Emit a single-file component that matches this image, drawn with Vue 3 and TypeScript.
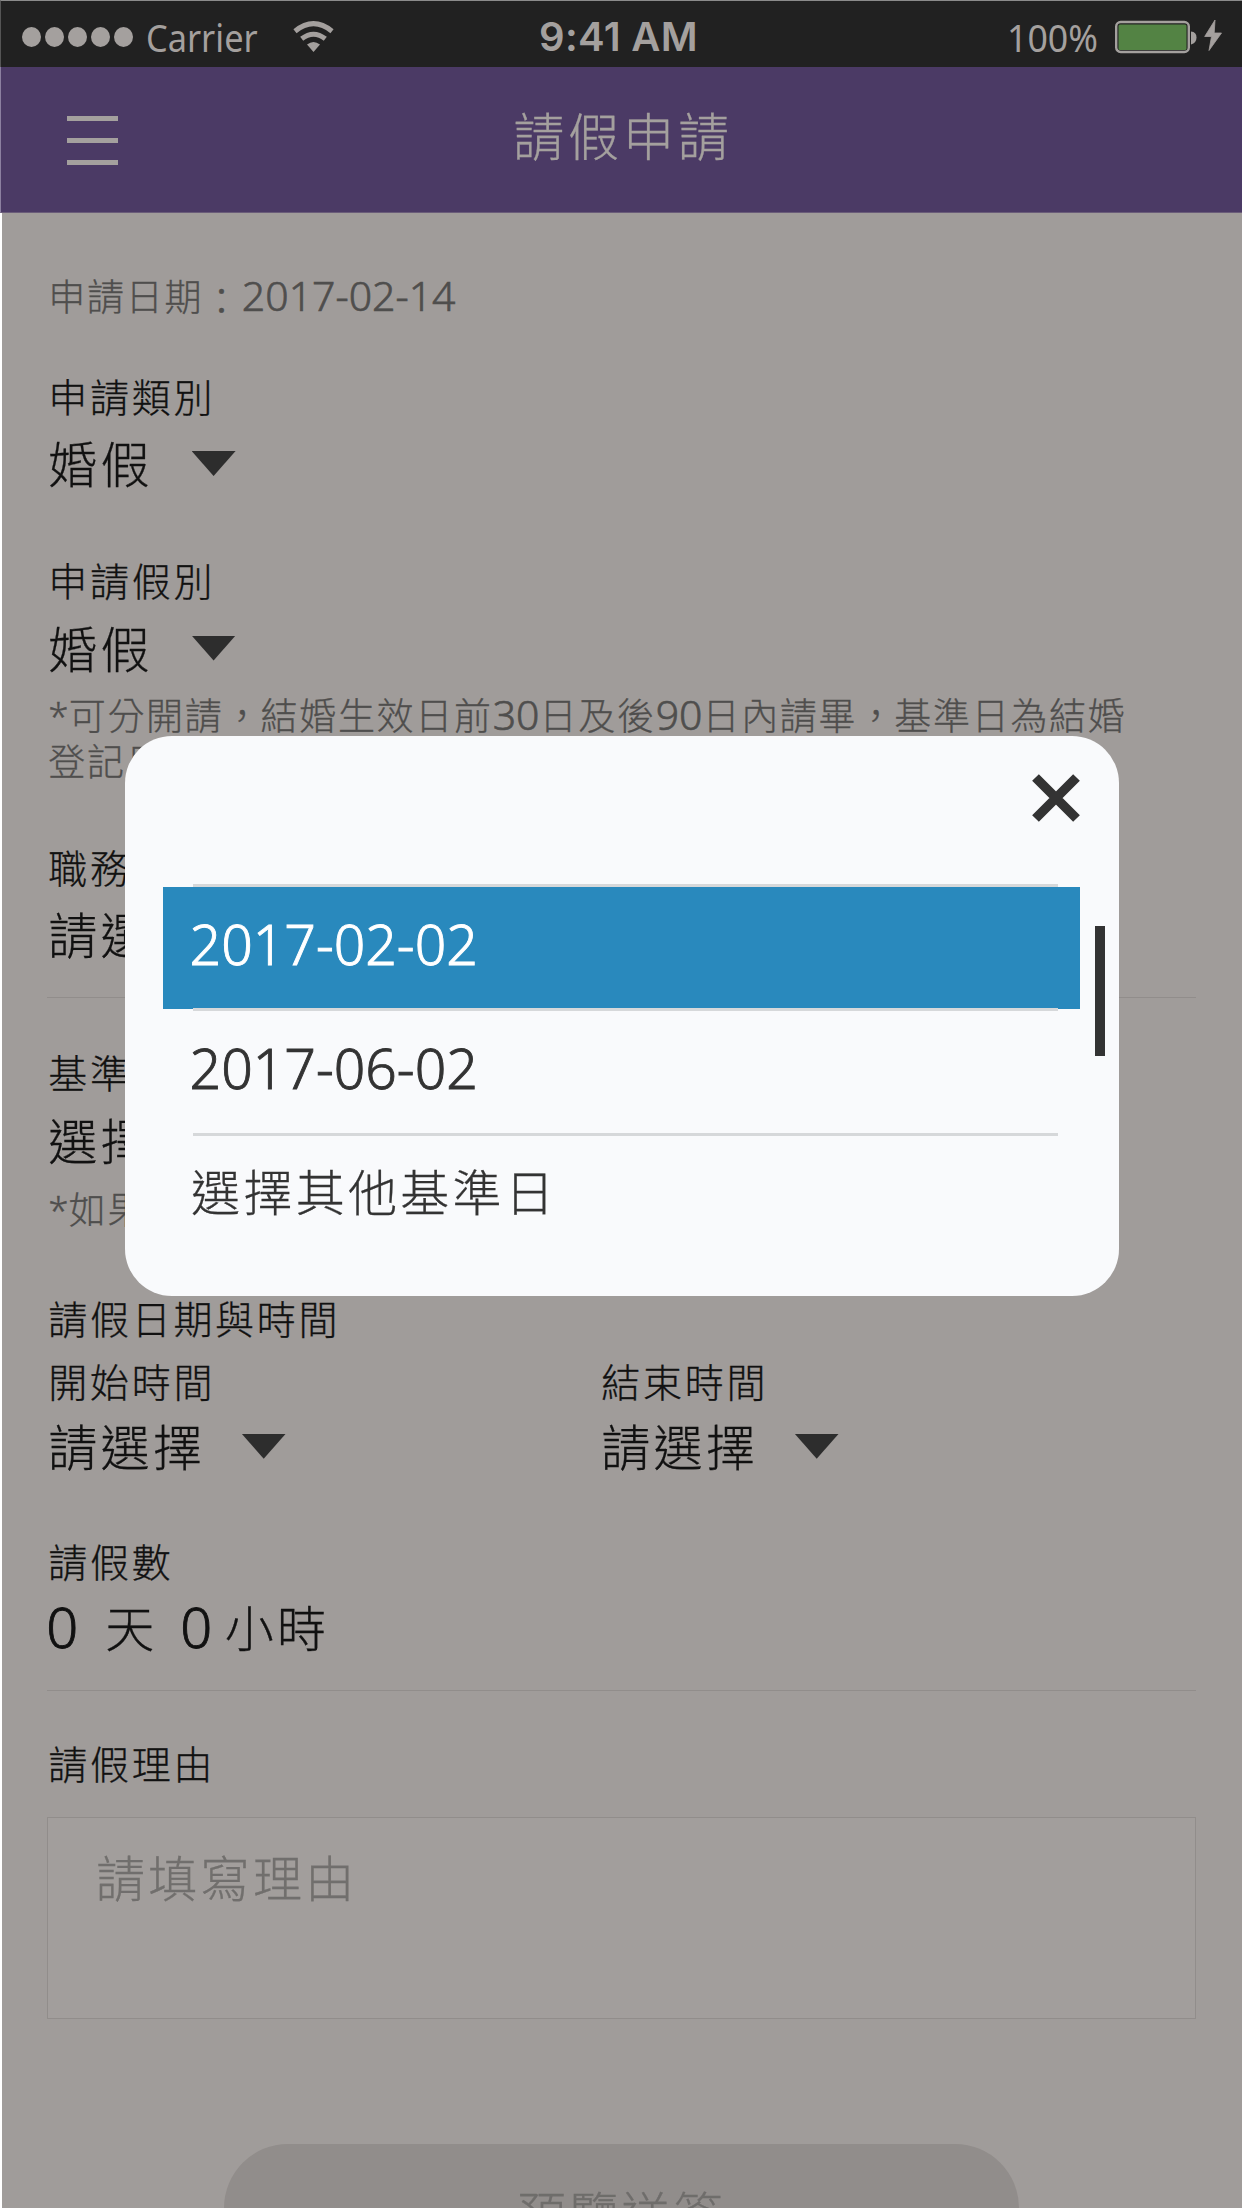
<script setup lang="ts">
import { ref } from 'vue'

interface DateOption {
  label: string
  latin: boolean
}

const options: DateOption[] = [
  { label: '2017-02-02', latin: true },
  { label: '2017-06-02', latin: true },
  { label: '選擇其他基準日', latin: false },
]
const selected = ref(0)
</script>

<template>
  <div class="screen">
    <div class="status">
      <div class="status-left">
        <i v-for="n in 5" :key="n" class="dot"></i>
        <span class="carrier">Carrier</span>
        <svg class="wifi" width="42" height="32" viewBox="0 0 42 32">
          <g fill="none" stroke="#a4a09e">
            <path d="M2 10.2Q20.500-4.800 39 10.200" stroke-width="5" />
            <path d="M8.700 17.800Q20.500 8.600 32.300 17.800" stroke-width="5" />
          </g>
          <path d="M20.500 31 14 23.600Q20.500 18.200 27 23.600Z" fill="#a4a09e" />
        </svg>
      </div>
      <div class="clock">9:41 AM</div>
      <div class="status-right">
        <span class="percent">100%</span>
        <svg class="battery" width="108" height="36" viewBox="0 0 108 36">
          <rect x="1.200" y="3" width="72.600" height="30" rx="4.500" fill="none" stroke="#a4a09e" stroke-width="2.400" />
          <rect x="3.500" y="5.500" width="68" height="25.500" rx="1.500" fill="#538344" />
          <path d="M76 12.500Q81.500 13 81.500 18.500T76 25.500Z" fill="#a4a09e" />
          <path d="M100 1 89.700 17.500H96.500L94 31.500 106.500 14H99.200Z" fill="#a4a09e" stroke="#a4a09e" stroke-width="0.800" />
        </svg>
      </div>
    </div>

    <header class="header">
      <button class="menu" type="button" aria-label="menu"><i></i><i></i><i></i></button>
      <h1>請假申請</h1>
    </header>

    <main class="form">
      <p class="date">申請日期<span class="colon">：</span><span class="num">2017-02-14</span></p>

      <section class="field kind">
        <div class="label">申請類別</div>
        <div class="value">婚假<i class="caret"></i></div>
      </section>

      <section class="field leave">
        <div class="label">申請假別</div>
        <div class="value">婚假<i class="caret"></i></div>
        <p class="note"><span class="star">*</span>可分開請<span class="comma">，</span>結婚生效日前<span class="num">30</span>日及後<span class="num">90</span>日內請畢<span class="comma">，</span>基準日為結婚<br />登記日</p>
      </section>

      <section class="field agent">
        <div class="label">職務代理人</div>
        <div class="value">請選擇</div>
      </section>
      <hr />

      <section class="field base">
        <div class="label">基準日</div>
        <div class="value">選擇基準日</div>
        <p class="note"><span class="star">*</span>如果</p>
      </section>

      <section class="field period">
        <div class="label">請假日期與時間</div>
        <div class="columns">
          <div class="column">
            <div class="label">開始時間</div>
            <div class="value">請選擇<i class="caret"></i></div>
          </div>
          <div class="column">
            <div class="label">結束時間</div>
            <div class="value">請選擇<i class="caret"></i></div>
          </div>
        </div>
      </section>

      <section class="field amount">
        <div class="label">請假數</div>
        <div class="value"><span class="num">0</span><span class="day">天</span><span class="num">0</span><span class="hour">小時</span></div>
      </section>
      <hr />

      <section class="reason">
        <div class="label">請假理由</div>
        <div class="textarea">請填寫理由</div>
      </section>

      <button class="submit" type="button">預覽送簽</button>
    </main>

    <div class="dialog">
      <button class="close" type="button" aria-label="close">
        <svg width="48" height="48" viewBox="0 0 48 48">
          <path d="M3.500 3.500 44.500 44.500M44.500 3.500 3.500 44.500" stroke="#333" stroke-width="9.500" />
        </svg>
      </button>
      <div class="list">
        <div
          v-for="(option, i) in options"
          :key="option.label"
          class="option"
          :class="{ active: i === selected, latin: option.latin }"
          @click="selected = i"
        >
          <span :class="{ num: option.latin }">{{ option.label }}</span>
        </div>
      </div>
      <div class="thumb"></div>
    </div>
  </div>
</template>

<style>
body {
  margin: 0;
  background: #fff;
}
</style>

<style scoped>
.screen {
  position: relative;
  width: 1242px;
  height: 2208px;
  overflow: hidden;
  box-sizing: border-box;
  background: #a09c9a;
  color: #111;
  font-family: 'Noto Sans CJK TC', sans-serif;
  font-weight: 300;
  -webkit-text-stroke-width: 0.300px;
  display: flex;
  flex-direction: column;
}
button {
  border: 0;
  padding: 0;
  margin: 0;
  background: none;
  font: inherit;
  color: inherit;
}
p, h1 {
  margin: 0;
  font-weight: inherit;
}
.num {
  font-family: 'Noto Sans', sans-serif;
  line-height: 1;
  letter-spacing: 0;
  font-weight: 300;
  -webkit-text-stroke-width: 0.016em;
}

.status {
  flex: none;
  height: 67px;
  box-sizing: border-box;
  padding-top: 6px;
  border-top: 1px solid #8b8b8b;
  border-left: 1px solid #555;
  background: #212121;
  color: #a4a09e;
  display: grid;
  grid-template-columns: 1fr auto 1fr;
  align-items: center;
  font-family: 'Noto Sans', sans-serif;
  font-weight: 400;
  -webkit-text-stroke-width: 0;
}
.status-left {
  display: flex;
  align-items: center;
  padding-left: 21px;
}
.dot {
  width: 19px;
  height: 20px;
  margin-right: 4px;
  border-radius: 50%;
  background: #a4a09e;
}
.carrier {
  width: 111px;
  margin-left: 9px;
  font-size: 39px;
  line-height: 58px;
  transform: scaleX(0.88);
  transform-origin: 0 50%;
}
.wifi {
  margin-left: 36px;
}
.clock {
  padding-right: 6px;
  font-family: Inter, sans-serif;
  font-weight: 600;
  font-size: 40px;
  letter-spacing: 0.300px;
  line-height: 58px;
}
.status-right {
  display: flex;
  justify-content: flex-end;
  align-items: center;
  padding-right: 19px;
}
.percent {
  width: 90px;
  margin-right: 18px;
  font-size: 38px;
  line-height: 58px;
  transform: scaleX(0.94);
  transform-origin: 0 50%;
}

.header {
  flex: none;
  height: 146px;
  box-sizing: border-box;
  border-left: 1px solid #8c80a0;
  border-bottom: 1px solid #6a5c79;
  background: #4b3a65;
  color: #a4a09e;
  display: grid;
  grid-template-columns: 203px 1fr 200px;
}
.menu {
  display: flex;
  flex-direction: column;
  gap: 17px;
  padding: 49px 0 0 66px;
}
.menu i {
  width: 51px;
  height: 5px;
  background: #a4a09e;
}
.header h1 {
  font-size: 51px;
  letter-spacing: 3.900px;
  line-height: 135px;
  text-align: center;
}

.form {
  flex: 1;
  border-left: 2px solid #fff;
  padding: 56.500px 46px 0 45px;
  display: flex;
  flex-direction: column;
}
.field,
.date {
  padding-left: 1.300px;
}
.date,
.note {
  color: #4f4e4d;
  font-size: 37px;
  letter-spacing: 1.700px;
  white-space: nowrap;
}
.date {
  height: 50px;
  line-height: 50px;
}
.colon {
  position: relative;
  top: 4px;
}
.comma {
  letter-spacing: 0;
}
.date .num,
.note .num {
  font-size: 41px;
}
.star {
  font-family: 'Noto Sans', sans-serif;
  line-height: 1;
  font-size: 37px;
  letter-spacing: 0;
}
.note {
  line-height: 46.600px;
  margin-top: 14px;
}
.label {
  height: 50px;
  line-height: 50px;
  font-size: 39px;
  letter-spacing: 2.700px;
  white-space: nowrap;
}
.value {
  height: 60px;
  line-height: 60px;
  margin-top: 12.500px;
  font-size: 49px;
  letter-spacing: 3.300px;
  white-space: nowrap;
  display: flex;
  align-items: center;
}
.caret {
  width: 44px;
  height: 25px;
  margin: 3px 0 0 38.700px;
  background: #2d2d2d;
  clip-path: polygon(0 0, 100% 0, 50% 100%);
}
.kind {
  margin-top: 50px;
}
.leave {
  margin-top: 62px;
}
.agent {
  margin-top: 57px;
}
hr {
  width: 100%;
  height: 1px;
  border: 0;
  margin: 34px 0 0;
  background: #918d8b;
}
.base {
  margin-top: 48px;
}
.base .note {
  margin-top: 16.500px;
}
.period {
  margin-top: 60px;
}
.columns {
  margin-top: 13px;
  display: grid;
  grid-template-columns: 553px 1fr;
}
.columns .value {
  margin-top: 10px;
}
.columns .caret {
  margin-left: 36.500px;
}
.amount {
  margin-top: 60px;
}
.amount .value {
  margin-top: 11.500px;
}
.amount .num {
  font-size: 56px;
  width: 32px;
}
.amount .num:first-child {
  margin-left: -2px;
}
.day {
  width: 52px;
  margin: 0 23px 0 27px;
}
.hour {
  margin-left: 12.500px;
}
.reason {
  margin-top: 46px;
}
.reason .label {
  padding-left: 1.300px;
}
.textarea {
  height: 202px;
  box-sizing: border-box;
  margin-top: 30px;
  padding: 27px 48px;
  border: 1px solid #918d8b;
  background: #a29e9c;
  color: #716f6d;
  font-size: 49px;
  letter-spacing: 3.300px;
  line-height: 61px;
}
.submit {
  flex: none;
  width: 795px;
  height: 134px;
  margin: 125px 0 0 177px;
  border-radius: 64px;
  background: #918d8b;
  color: #6f6d6b;
  font-size: 49px;
  letter-spacing: 3.300px;
  line-height: 127px;
  text-align: center;
}

.dialog {
  position: absolute;
  left: 124.600px;
  top: 736.300px;
  width: 994px;
  height: 559.700px;
  border-radius: 47px;
  background: #f9fafc;
  color: #333;
}
.close {
  position: absolute;
  right: 38.500px;
  top: 37.500px;
  width: 48px;
  height: 48px;
}
.close svg {
  display: block;
}
.list {
  padding: 148.700px 38.500px 0;
}
.option {
  position: relative;
  height: 124.500px;
  line-height: 111px;
  padding-left: 28px;
  font-size: 49px;
  letter-spacing: 3.300px;
}
.option.latin {
  line-height: 117px;
  padding-left: 26.500px;
}
.option .num {
  font-size: 55.300px;
  letter-spacing: 0;
}
.option::before {
  content: '';
  position: absolute;
  left: 30px;
  right: 22px;
  top: -1px;
  height: 3px;
  background: #d6d8da;
}
.option.active {
  color: #fff;
}
.option.active::after {
  content: '';
  position: absolute;
  z-index: 0;
  inset: 2px 0 0.500px;
  background: #2989bd;
}
.option span {
  position: relative;
  z-index: 1;
}
.thumb {
  position: absolute;
  right: 13.500px;
  top: 189.700px;
  width: 10px;
  height: 130px;
  background: #333;
}
</style>
